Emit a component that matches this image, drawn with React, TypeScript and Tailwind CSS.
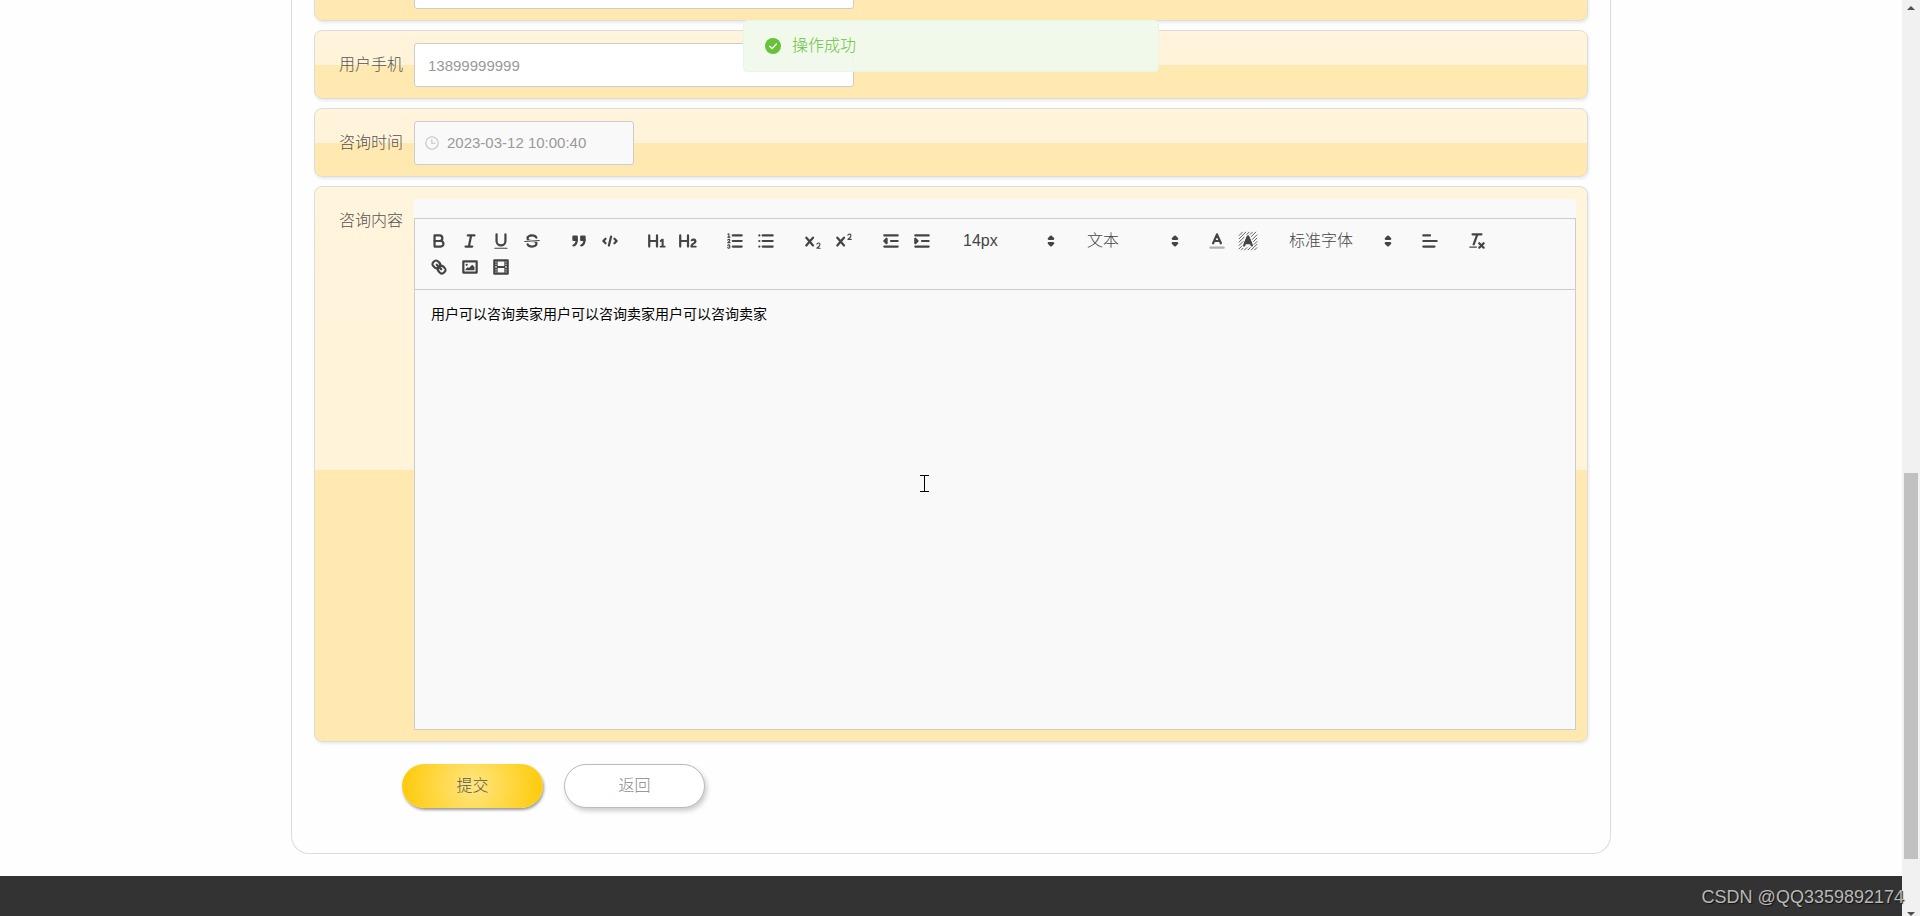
import type { ReactNode } from "react";

const X_SHAPE =
  "M9.65,5.241a1,1,0,0,0-1.409.108L6,7.964,3.759,5.349A1,1,0,0,0,2.192,6.59178Q2.21541,6.6213,2.241,6.649L4.684,9.5,2.241,12.35A1,1,0,0,0,3.71,13.70722q0.02557-.02768.049-0.05722L6,11.036,8.241,13.65a1,1,0,1,0,1.567-1.24277Q9.78459,12.3777,9.759,12.35L7.316,9.5,9.759,6.651A1,1,0,0,0,9.65,5.241Z";

const F = { fill: "#444", stroke: "none" };
const FS = { fill: "#444" };

const icons: Record<string, ReactNode> = {
  加粗: (
    <>
      <path d="M5,4H9.5A2.5,2.5,0,0,1,12,6.5v0A2.5,2.5,0,0,1,9.5,9H5V4Z" />
      <path d="M5,9h5.5A2.5,2.5,0,0,1,13,11.5v0A2.5,2.5,0,0,1,10.5,14H5V9Z" />
    </>
  ),
  斜体: <path d="M7,4H13M5,14H11M8,14L10,4" />,
  下划线: (
    <>
      <path d="M5,3V9a4.012,4.012,0,0,0,4,4H9a4.012,4.012,0,0,0,4-4V3" />
      <rect {...F} x="3" y="15" width="12" height="1" rx="0.5" />
    </>
  ),
  删除线: (
    <>
      <path d="M15.5,8.5L2.5,9.5" strokeWidth="1" />
      <path {...F} d="M9.007,8C6.542,7.791,6,7.519,6,6.5,6,5.792,7.283,5,9,5c1.571,0,2.765.679,2.969,1.309a1,1,0,0,0,1.9-.617C13.356,4.106,11.354,3,9,3,6.2,3,4,4.538,4,6.5a3.2,3.2,0,0,0,.5,1.843Z" />
      <path {...F} d="M8.984,10C11.457,10.208,12,10.479,12,11.5c0,.708-1.283,1.5-3,1.5-1.571,0-2.765-.679-2.969-1.309a1,1,0,1,0-1.9.617C4.644,13.894,6.646,15,9,15c2.8,0,5-1.538,5-3.5a3.2,3.2,0,0,0-.5-1.843Z" />
    </>
  ),
  引用: (
    <>
      <rect {...FS} x="4" y="5" width="3" height="3" />
      <rect {...FS} x="11" y="5" width="3" height="3" />
      <path {...FS} d="M7,8c0,4.031-3,5-3,5" />
      <path {...FS} d="M14,8c0,4.031-3,5-3,5" />
    </>
  ),
  代码: <path d="M5,7L3,9L5,11M13,7L15,9L13,11M10,5L8,13" />,
  一级标题: (
    <path {...F} d="M10,4V14a1,1,0,0,1-2,0V10H3v4a1,1,0,0,1-2,0V4A1,1,0,0,1,3,4V8H8V4a1,1,0,0,1,2,0Zm6.06787,9.209H14.98975V7.59863a.54085.54085,0,0,0-.605-.60547h-.62744a1.01119,1.01119,0,0,0-.748.29688L11.645,8.56641a.5435.5435,0,0,0-.022.8584l.28613.30762a.53861.53861,0,0,0,.84717.0332l.09912-.08789a1.2137,1.2137,0,0,0,.2417-.35254h.02246s-.01123.30859-.01123.60547V13.209H12.041a.54085.54085,0,0,0-.605.60547v.43945a.54085.54085,0,0,0,.605.60547h4.02686a.54085.54085,0,0,0,.605-.60547v-.43945A.54085.54085,0,0,0,16.06787,13.209Z" />
  ),
  二级标题: (
    <path {...F} d="M16.73975,13.81445v.43945a.54085.54085,0,0,1-.605.60547H11.855a.58392.58392,0,0,1-.64893-.60547V14.0127c0-2.90527,3.39941-3.42187,3.39941-4.55469a.77675.77675,0,0,0-.84717-.78125,1.17684,1.17684,0,0,0-.83594.38477c-.2749.26367-.561.374-.85791.13184l-.4292-.34082c-.30811-.24219-.38525-.51758-.1543-.81445a2.97155,2.97155,0,0,1,2.45361-1.17676,2.45393,2.45393,0,0,1,2.68408,2.40918c0,2.45312-3.1792,2.92676-3.27832,3.93848h2.79443A.54085.54085,0,0,1,16.73975,13.81445ZM9,3A.99974.99974,0,0,0,8,4V8H3V4A1,1,0,0,0,1,4V14a1,1,0,0,0,2,0V10H8v4a1,1,0,0,0,2,0V4A.99974.99974,0,0,0,9,3Z" />
  ),
  有序列表: (
    <>
      <path d="M7,4H15M7,9H15M7,14H15" />
      <path d="M2.5,5.5H4.5" strokeWidth="1" />
      <path {...F} d="M3.5,6A0.5,0.5,0,0,1,3,5.5V3.085l-0.276.138A0.5,0.5,0,0,1,2.053,3c-0.124-.247-0.023-0.324.224-0.447l1-.5A0.5,0.5,0,0,1,4,2.5v3A0.5,0.5,0,0,1,3.5,6Z" />
      <path strokeWidth="1" d="M4.5,10.5h-2c0-.234,1.85-1.076,1.85-2.234A0.959,0.959,0,0,0,2.5,8.156" />
      <path strokeWidth="1" d="M2.5,14.846a0.959,0.959,0,0,0,1.85-.109A0.7,0.7,0,0,0,3.75,14a0.688,0.688,0,0,0,.6-0.736,0.959,0.959,0,0,0-1.85-.109" />
    </>
  ),
  无序列表: <path d="M6,4H15M6,9H15M6,14H15M3,4H3.01M3,9H3.01M3,14H3.01" />,
  下标: (
    <>
      <path {...F} d="M15.5,15H13.861a3.858,3.858,0,0,0,1.914-2.975,1.8,1.8,0,0,0-1.6-1.751A1.921,1.921,0,0,0,12.021,11.7a0.50013,0.50013,0,1,0,.957.291h0a0.914,0.914,0,0,1,1.053-.725,0.81,0.81,0,0,1,.744.762c0,1.076-1.16971,1.86982-1.93971,2.43082A1.45639,1.45639,0,0,0,12,15.5a0.5,0.5,0,0,0,.5.5h3A0.5,0.5,0,0,0,15.5,15Z" />
      <path {...F} d={X_SHAPE} />
    </>
  ),
  上标: (
    <>
      <path {...F} d="M15.5,7H13.861a4.015,4.015,0,0,0,1.914-2.975,1.8,1.8,0,0,0-1.6-1.751A1.922,1.922,0,0,0,12.021,3.7a0.5,0.5,0,1,0,.957.291,0.917,0.917,0,0,1,1.053-.725,0.81,0.81,0,0,1,.744.762c0,1.077-1.164,1.925-1.934,2.486A1.423,1.423,0,0,0,12,7.5a0.5,0.5,0,0,0,.5.5h3A0.5,0.5,0,0,0,15.5,7Z" />
      <path {...F} d={X_SHAPE} />
    </>
  ),
  减少缩进: (
    <>
      <path d="M3,14H15M3,4H15M9,9H15" />
      <path {...FS} d="M5,7V11L3,9Z" />
    </>
  ),
  增加缩进: (
    <>
      <path d="M3,14H15M3,4H15M9,9H15" />
      <path {...FS} d="M3,7V11L5,9Z" />
    </>
  ),
  字体颜色: (
    <>
      <path d="M3,15H15" opacity="0.4" />
      <path d="M5.5,11L9,3L12.5,11M11.63,9H6.38" />
    </>
  ),
  背景颜色: (
    <>
      <path
        strokeWidth="0.9"
        opacity="0.85"
        d="M1,4L4,1M1,7L7,1M1,10L5.5,5.5M1,13L4.5,9.5M1,16L3.5,13.5M8,3L10,1M3,17L4.5,15.5M6,17L8,15M9,17L11,15M12,17L17,12M15,17L17,15M11,3L13,1M12,5L16,1M13,7.5L17,3.5M14,9.5L17,6.5M14.5,12L17,9.5"
      />
      <path {...FS} d="M9,5L6.6,10.6H11.4Z" />
      <path d="M5.5,13L9,5L12.5,13M11.63,11H6.38" />
    </>
  ),
  对齐: <path d="M3,9H15M3,14H13M3,4H9" />,
  清除格式: (
    <>
      <path d="M5,3H13M6,12L9.35,3M11,11L15,15M15,11L11,15" />
      <rect {...F} x="2" y="14" width="7" height="1" rx="0.5" />
    </>
  ),
  链接: (
    <>
      <path d="M7,7L11,11" />
      <path d="M8.9,4.577a3.476,3.476,0,0,1,.36,4.679A3.476,3.476,0,0,1,4.577,8.9C3.185,7.5,2.035,6.4,4.217,4.217S7.5,3.185,8.9,4.577Z" />
      <path d="M13.423,9.1a3.476,3.476,0,0,0-4.679-.36,3.476,3.476,0,0,0,.36,4.679c1.392,1.392,2.5,2.542,4.679.36S14.815,10.5,13.423,9.1Z" />
    </>
  ),
  图片: (
    <>
      <rect x="3" y="4" width="12" height="10" />
      <circle {...F} cx="6" cy="7" r="1" />
      <path {...F} d="M5,12V11L7,9L8,10L11,7L13,9V12Z" />
    </>
  ),
  视频: (
    <>
      <rect x="3" y="3" width="12" height="12" />
      <path {...F} d="M5,3h1v12h-1zM12,3h1v12h-1zM5,8h8v2h-8zM3,5h3v1h-3zM3,7h3v1h-3zM3,10h3v1h-3zM3,12h3v1h-3zM12,5h3v1h-3zM12,7h3v1h-3zM12,10h3v1h-3zM12,12h3v1h-3z" />
    </>
  ),
};

function Glyph({ children }: { children: ReactNode }) {
  return (
    <svg
      viewBox="0 0 18 18"
      className="size-5"
      fill="none"
      stroke="#444"
      strokeWidth="2"
      strokeLinecap="round"
      strokeLinejoin="round"
      aria-hidden="true"
    >
      {children}
    </svg>
  );
}

function Group({ names }: { names: string[] }) {
  return (
    <div className="flex">
      {names.map((name) => (
        <button key={name} type="button" aria-label={name} className="flex h-[26px] w-[31px] items-center justify-center">
          <Glyph>{icons[name]}</Glyph>
        </button>
      ))}
    </div>
  );
}

function Picker({ label, value, wide = false }: { label: string; value: string; wide?: boolean }) {
  return (
    <div className={wide ? "relative w-[119px]" : "relative w-[108px]"}>
      <select
        aria-label={label}
        defaultValue={value}
        className="block h-[26px] w-full appearance-none bg-transparent pl-[10px] text-[16px] leading-[26px] font-light text-[#444]"
      >
        <option>{value}</option>
      </select>
      <span className="pointer-events-none absolute top-[3px] right-0">
        <Glyph>
          <path {...FS} d="M7,11L9,13L11,11ZM7,7L9,5L11,7Z" />
        </Glyph>
      </span>
    </div>
  );
}

function Row({ label, id, children }: { label?: string; id: string; children: ReactNode }) {
  return (
    <div className="flex rounded-lg border border-[#dcdcdc] bg-[linear-gradient(#fff4dc_0%,#fff3d9_51%,#ffe9b1_51%,#ffe9b1_100%)] pt-3 pr-[11px] pb-[11px] shadow-[1px_2px_3px_rgba(0,0,0,0.08)]">
      <label htmlFor={id} className="w-[99px] shrink-0 pr-[11px] text-right text-[16px] leading-[44px] font-light text-[#555]">
        {label}
      </label>
      {children}
    </div>
  );
}

const fieldClass =
  "h-11 w-[440px] rounded-[3px] border border-[#ccc] bg-white px-[13px] text-[15px] text-[#999] outline-none";

export default function App() {
  return (
    <div className="flex h-screen overflow-hidden bg-[#fefefe] font-['Liberation_Sans','Noto_Sans_CJK_SC',sans-serif]">
      <div className="flex min-w-0 flex-1 flex-col">
        <main className="mx-auto w-full max-w-[1320px] rounded-b-[18px] border border-t-0 border-[#ddd] px-[22px] pb-[45px]">
          <form className="flex flex-col" onSubmit={(e) => e.preventDefault()}>
            <div className="-mt-12 flex flex-col gap-[9px]">
              <Row id="name">
                <input id="name" aria-label="用户姓名" className={fieldClass} />
              </Row>
              <Row label="用户手机" id="phone">
                <input id="phone" className={fieldClass} defaultValue="13899999999" />
              </Row>
              <Row label="咨询时间" id="time">
                <div className="flex h-11 w-[220px] items-center gap-2 rounded-[3px] border border-[#ccc] bg-[#f9f9f9] pl-[10px]">
                  <svg viewBox="0 0 14 14" className="size-[14px] shrink-0" fill="none" stroke="#c0c4cc" strokeWidth="1.1" aria-hidden="true">
                    <circle cx="7" cy="7" r="6.2" />
                    <path d="M6.8,3.3V7.3H10.3" />
                  </svg>
                  <input
                    id="time"
                    readOnly
                    defaultValue="2023-03-12 10:00:40"
                    className="min-w-0 flex-1 bg-transparent text-[15px] text-[#999] outline-none"
                  />
                </div>
              </Row>
              <Row label="咨询内容" id="content">
                <div className="min-w-0 flex-1 rounded-t bg-[#f9f9f9] pt-[19px]">
                  <div className="border border-[#ccc]">
                    <div className="flex flex-wrap gap-x-4 border-b border-[#ccc] px-2 py-[9px]">
                      <Group names={["加粗", "斜体", "下划线", "删除线"]} />
                      <Group names={["引用", "代码"]} />
                      <Group names={["一级标题", "二级标题"]} />
                      <Group names={["有序列表", "无序列表"]} />
                      <Group names={["下标", "上标"]} />
                      <Group names={["减少缩进", "增加缩进"]} />
                      <Picker label="字号" value="14px" />
                      <Picker label="段落" value="文本" />
                      <Group names={["字体颜色", "背景颜色"]} />
                      <Picker label="字体" value="标准字体" wide />
                      <Group names={["对齐"]} />
                      <Group names={["清除格式"]} />
                      <Group names={["链接", "图片", "视频"]} />
                    </div>
                    <textarea
                      id="content"
                      defaultValue="用户可以咨询卖家用户可以咨询卖家用户可以咨询卖家"
                      className="block h-[439px] w-full resize-none bg-transparent px-4 py-[14px] text-[14px] leading-5 text-black outline-none"
                    />
                  </div>
                </div>
              </Row>
            </div>
            <div className="mt-[22px] flex items-center gap-[21px] pl-[88px]">
              <button
                type="submit"
                className="h-11 w-[141px] rounded-full bg-[radial-gradient(circle,#ffe680_0%,#ffcc12_90%)] text-[16px] font-light text-[#555] shadow-[1px_2px_3px_rgba(0,0,0,0.4)]"
              >
                提交
              </button>
              <button
                type="button"
                className="h-11 w-[141px] rounded-full border border-[#bbb] bg-white text-[16px] font-light text-[#888] shadow-[2px_3px_5px_rgba(0,0,0,0.2)]"
              >
                返回
              </button>
            </div>
          </form>
        </main>
        <footer className="mt-[22px] flex-1 bg-[#333]" />
      </div>

      <div className="flex w-[18px] shrink-0 flex-col items-center bg-[#f1f1f1]" aria-hidden="true">
        <svg viewBox="0 0 18 17" className="h-[17px] w-[18px]">
          <path d="M5 10L9 6L13 10Z" fill="#505050" />
        </svg>
        <div className="flex w-[14px] flex-1 flex-col">
          <div className="grow-[457]" />
          <div className="grow-[386] bg-[#c1c1c1]" />
          <div className="grow-[53]" />
        </div>
        <svg viewBox="0 0 18 4" className="h-1 w-[18px]">
          <path d="M5 0H13L9 4Z" fill="#505050" />
        </svg>
      </div>

      <div
        role="status"
        className="absolute top-5 left-1/2 -ml-[217px] flex h-[52px] w-[416px] items-center gap-[11px] rounded border border-[#e9f6e3] bg-[#f0f9eb]/95 pl-[21px] text-[16px] font-light text-[#67c23a]"
      >
        <svg viewBox="0 0 16 16" className="size-4" aria-hidden="true">
          <circle cx="8" cy="8" r="8" fill="#67c23a" />
          <path d="M4.6 8.2L7.1 10.6L11.4 6" fill="none" stroke="#fff" strokeWidth="1.3" strokeLinecap="round" />
        </svg>
        操作成功
      </div>

      <svg viewBox="0 0 9 17" className="pointer-events-none absolute top-[475px] left-[920px] h-[17px] w-[9px]" aria-hidden="true">
        <path d="M0 0.5H9M0 16.5H9M4.5 0V17" stroke="#000" strokeWidth="1" />
      </svg>

      <p className="absolute right-4 bottom-[7px] text-[18px] leading-6 text-[#b8b8b8] [text-shadow:1px_1px_1px_#111]">
        CSDN @QQ3359892174
      </p>
    </div>
  );
}
